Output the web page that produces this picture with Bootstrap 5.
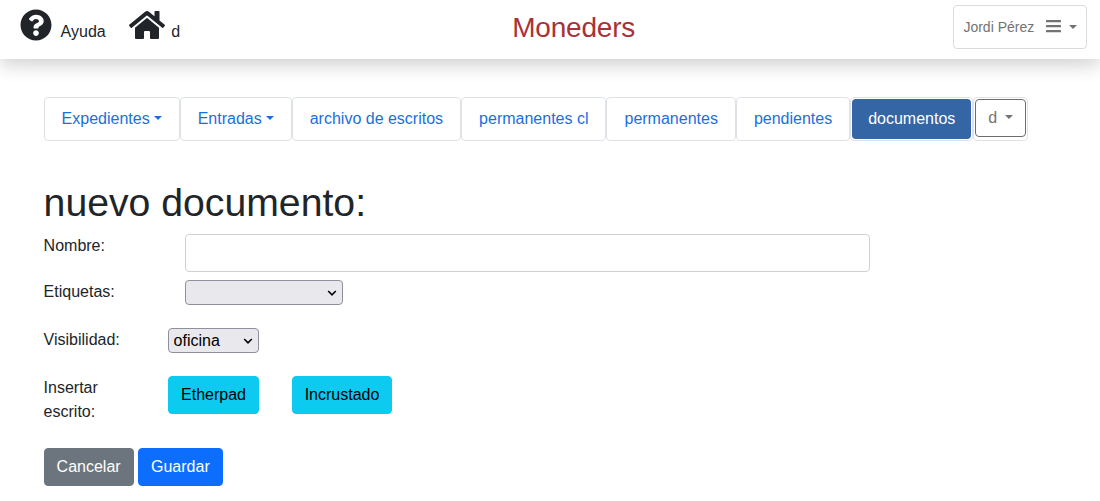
<!DOCTYPE html>
<html lang="es">
<head>
<meta charset="utf-8">
<meta name="viewport" content="width=device-width, initial-scale=1">
<title>Moneders</title>
<link href="https://cdn.jsdelivr.net/npm/bootstrap@5.3.0/dist/css/bootstrap.min.css" rel="stylesheet">
<style>
  body { font-family: "Liberation Sans", Arial, sans-serif; overflow: hidden; }
  .btn, .form-control, .tab-item { --bs-btn-border-radius: 4px; border-radius: 4px; }
  .top-bar { height: 59px; padding: 5px 13px 0 19.6px; box-shadow: 0 8px 16px rgba(0,0,0,.15), -16px 8px 16px -8px rgba(0,0,0,.02), 16px 8px 16px -8px rgba(0,0,0,.02); display: grid; grid-template-columns: 492.6px auto 1fr; align-items: start; }
  .top-link { color: #212529; text-decoration: none; white-space: nowrap; padding-top: 4px; line-height: 32px; display: flex; gap: 9px; }
  .top-link span { padding-top: 7px; line-height: 32px; }
  .top-title { color: #a83236; font-size: 28px; line-height: 34px; margin: 6px 0 0; font-weight: 400; letter-spacing: -.2px; }
  .user-btn { height: 44px; width: 134px; padding: 0 9px 0 9.4px; font-size: 14px; color: #737373; border: 1px solid #dbdbdb; background: #fff; border-radius: 4px; }
  .user-btn::after { margin-left: 8px; margin-top: -1px; }
  .tab-list { margin: 38px 0 0; }
  .tab-item { border: 1px solid #dee2e6; }
  .tab-item .nav-link { padding: 8px 16px; border: 1px solid transparent; border-radius: 4px; color: #1a6fe0; white-space: nowrap; }
  .tab-item .nav-link.active { background: #3465a4; background-clip: padding-box; border-radius: 5px; color: #fff; }
  .tab-item .dropdown-toggle::after { margin-left: 4px; }
  .d-btn { margin: 1px; padding: 6px 12px; height: 38px; color: #737373; border: 1px solid #6c6c6c; background: #fff; }
  .tab-item .d-btn::after { margin-left: 8px; }
  .page-body { padding: 0 43.6px; }
  .doc-title { font-size: 39.2px; line-height: 48px; margin: 38px 0 6px; font-weight: 400; }
  .wide-grid { display: grid; grid-template-columns: 141.4px 685px; row-gap: 8px; }
  .wide-grid label[for="nombre"] { padding-top: 1px; }
  .slim-grid { display: grid; grid-template-columns: 124.4px 91px 100px; column-gap: 0; row-gap: 23px; margin-top: 23px; }
  .slim-grid .gap-btn { margin-left: 33px; width: 100px; }
  .name-field { height: 38px; margin-top: 1px; border-color: #d0d0d0; }
  .pick { appearance: none; height: 25px; border: 1px solid #8f8f9d; border-radius: 4px; padding: 0 4.6px; color: #000; line-height: 23px;
    background: #e9e9ed url("data:image/svg+xml,%3Csvg xmlns='http://www.w3.org/2000/svg' width='10' height='6' viewBox='0 0 10 6'%3E%3Cpath d='M1.2 1 5 4.8 8.8 1' fill='none' stroke='%23000' stroke-width='1.6'/%3E%3C/svg%3E") no-repeat right 5px center; }
  .act-row { margin-top: 24px; gap: 4.4px; }
</style>
</head>
<body>
<header class="top-bar bg-white">
  <nav class="d-flex">
    <a class="top-link" href="#">
      <svg width="32" height="32" viewBox="0 0 512 512" fill="currentColor"><path d="M504 256c0 136.997-111.043 248-248 248S8 392.997 8 256C8 119.083 119.043 8 256 8s248 111.083 248 248zM262.655 90c-54.497 0-89.255 22.957-116.549 63.758-3.536 5.286-2.353 12.415 2.715 16.258l34.699 26.31c5.205 3.947 12.621 3.008 16.665-2.122 17.864-22.658 30.113-35.797 57.303-35.797 20.429 0 45.698 13.148 45.698 32.958 0 14.976-12.363 22.667-32.534 33.976C247.128 238.528 216 254.941 216 296v4c0 6.627 5.373 12 12 12h56c6.627 0 12-5.373 12-12v-1.333c0-28.462 83.186-29.647 83.186-106.667 0-58.002-60.165-102-116.531-102zM256 338c-25.365 0-46 20.635-46 46 0 25.364 20.635 46 46 46s46-20.636 46-46c0-25.364-20.635-46-46-46z"/></svg>
      <span>Ayuda</span>
    </a>
    <a class="top-link" href="#" style="gap:6px;margin-left:23.6px">
      <svg width="36" height="32" viewBox="0 0 576 512" fill="currentColor"><path d="M280.37 148.26L96 300.11V464a16 16 0 0 0 16 16l112.06-.29a16 16 0 0 0 15.92-16V368a16 16 0 0 1 16-16h64a16 16 0 0 1 16 16v95.64a16 16 0 0 0 16 16.05L464 480a16 16 0 0 0 16-16V300L295.67 148.26a12.19 12.19 0 0 0-15.3 0zM571.6 251.47L488 182.56V44.05a12 12 0 0 0-12-12h-56a12 12 0 0 0-12 12v72.61L318.47 43a48 48 0 0 0-61 0L4.34 251.47a12 12 0 0 0-1.6 16.9l25.5 31A12 12 0 0 0 45.15 301l235.22-193.74a12.19 12.19 0 0 1 15.3 0L530.9 301a12 12 0 0 0 16.9-1.6l25.5-31a12 12 0 0 0-1.7-16.93z"/></svg>
      <span>d</span>
    </a>
  </nav>
  <h1 class="top-title">Moneders</h1>
  <button class="user-btn dropdown-toggle d-flex align-items-center justify-content-between ms-auto" type="button">
    <span>Jordi Pérez</span>
    <svg class="ms-auto" width="15" height="14" viewBox="0 0 15 14" fill="currentColor"><rect y="0" width="15" height="2.2" rx=".5"/><rect y="5" width="15" height="2.2" rx=".5"/><rect y="10" width="15" height="2.2" rx=".5"/></svg>
  </button>
</header>
<main class="page-body">
  <ul class="nav flex-nowrap tab-list">
    <li class="tab-item"><a class="nav-link dropdown-toggle" href="#">Expedientes</a></li>
    <li class="tab-item"><a class="nav-link dropdown-toggle" href="#">Entradas</a></li>
    <li class="tab-item"><a class="nav-link" href="#">archivo de escritos</a></li>
    <li class="tab-item"><a class="nav-link" href="#">permanentes cl</a></li>
    <li class="tab-item"><a class="nav-link" href="#">permanentes</a></li>
    <li class="tab-item"><a class="nav-link" href="#">pendientes</a></li>
    <li class="tab-item"><a class="nav-link active" href="#">documentos</a></li>
    <li class="tab-item"><button class="btn d-btn dropdown-toggle" type="button">d</button></li>
  </ul>
  <h2 class="doc-title">nuevo documento:</h2>
  <form>
    <div class="wide-grid">
      <label for="nombre">Nombre:</label>
      <input id="nombre" class="form-control name-field" type="text">
      <label for="etiquetas">Etiquetas:</label>
      <select id="etiquetas" class="pick" style="width:158px"><option></option></select>
    </div>
    <div class="slim-grid">
      <label for="visibilidad">Visibilidad:</label>
      <select id="visibilidad" class="pick"><option>oficina</option></select>
      <span></span>
      <div>Insertar<br>escrito:</div>
      <div><button class="btn btn-info w-100 px-0" type="button">Etherpad</button></div>
      <div><button class="btn btn-info gap-btn px-0" type="button">Incrustado</button></div>
    </div>
    <div class="d-flex act-row">
      <button class="btn btn-secondary" type="button">Cancelar</button>
      <button class="btn btn-primary" type="button">Guardar</button>
    </div>
  </form>
</main>
<script src="https://cdn.jsdelivr.net/npm/bootstrap@5.3.0/dist/js/bootstrap.bundle.min.js"></script>
</body>
</html>
